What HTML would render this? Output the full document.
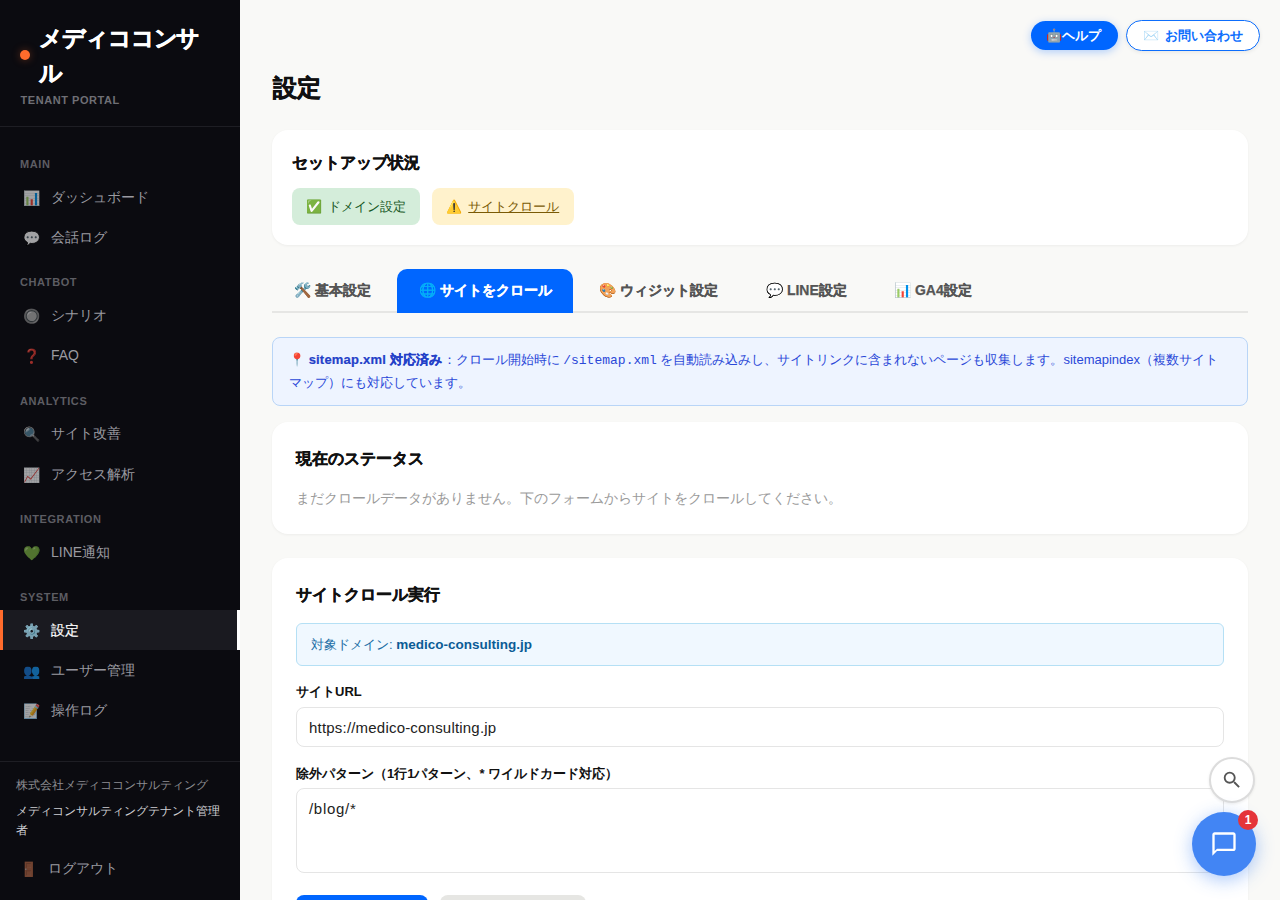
<!DOCTYPE html>
<html lang="ja">
<head>
<meta charset="utf-8">
<title>設定</title>
<style>
*{box-sizing:border-box;margin:0;padding:0}
html,body{width:1280px;height:900px;overflow:hidden}
body{font-family:"Liberation Sans",sans-serif;background:#f9f9f7;color:#111;font-size:14px;position:relative}
/* ---------- sidebar ---------- */
.side{position:absolute;left:0;top:0;width:240px;height:900px;background:#0b0b10;color:#9a9aa0}
.brand{position:absolute;left:0;top:0;width:240px;height:127px;border-bottom:1px solid #1e1e24}
.brand .dot{position:absolute;left:20px;top:50px;width:10px;height:10px;border-radius:50%;background:#ff6b2c;box-shadow:0 0 8px rgba(255,107,44,.35)}
.brand .name{position:absolute;left:39px;top:21px;width:182px;color:#fff;font-weight:700;font-size:23px;line-height:35px;letter-spacing:-1.1px;-webkit-text-stroke:.6px #fff}
.brand .sub{position:absolute;left:20.5px;top:92px;font-size:11px;font-weight:700;letter-spacing:.55px;color:#6f6f75;line-height:16px}
.sec{position:absolute;left:20px;font-size:11px;font-weight:700;letter-spacing:.6px;color:#5d5d63;line-height:14px}
.nav{position:absolute;left:0;width:240px;height:40px;line-height:40px;font-size:14px;color:#9a9aa0;white-space:nowrap}
.nav .ic{position:absolute;left:22.5px;top:1px;width:18px;text-align:center;font-size:14px;opacity:.62}
.nav .tx{position:absolute;left:51px;top:0}
.nav.on{background:#1a1a20;color:#fff;-webkit-text-stroke:.2px;border-left:3px solid #ff6b2c;width:237px}
.nav.on .ic{left:19.5px;opacity:.9}
.nav.on .tx{left:48px;top:0}
.strip{position:absolute;left:237px;top:610px;width:3px;height:40px;background:#fff}
.foot{position:absolute;left:0;top:761px;width:240px;height:139px;border-top:1px solid #1e1e24}
.foot .co{position:absolute;left:16px;top:13px;font-size:12px;color:#8d8d92;line-height:20px;white-space:nowrap}
.foot .us{position:absolute;left:16px;top:40px;width:208px;font-size:12px;color:#cfcfd3;line-height:19px}
.foot .lo{position:absolute;left:0;top:87px;width:240px;height:40px;line-height:40px;font-size:14px;color:#9a9aa0}
.foot .lo .ic{position:absolute;left:19.5px;top:0;width:18px;text-align:center;opacity:.62;font-size:14px}
.foot .lo .tx{position:absolute;left:48px;top:-1px}
/* ---------- main ---------- */
.topbtn{position:absolute;height:29px;border-radius:16px;font-size:13px;font-weight:700;line-height:29px;white-space:nowrap}
.help{left:1031px;top:21px;width:87px;background:#0066ff;color:#fff;box-shadow:0 2px 8px rgba(0,102,255,.3);padding-left:15px}
.contact{left:1126px;top:20px;width:134px;height:31px;line-height:29px;background:#fff;color:#0d6efd;border:1px solid #0d6efd;padding-left:16px;box-shadow:0 1px 4px rgba(0,0,0,.08)}
h1{position:absolute;left:273px;top:70px;font-size:24px;line-height:36px;font-weight:700;color:#111;letter-spacing:-.5px;-webkit-text-stroke:.6px #111}
.card{position:absolute;left:272px;width:976px;background:#fff;border-radius:16px;box-shadow:0 1px 3px rgba(0,0,0,.05)}
.card h2{position:absolute;font-size:16px;line-height:24px;font-weight:700;color:#111;white-space:nowrap;-webkit-text-stroke:.35px #111}
.badge{position:absolute;top:58px;height:37px;border-radius:8px;line-height:37px;font-size:13px;white-space:nowrap;padding-left:14px}
.tabs{position:absolute;left:272px;top:269px;width:976px;height:44px;border-bottom:2px solid #e6e6e4}
.tab{position:absolute;top:0;height:44px;line-height:42px;font-size:14px;font-weight:700;color:#555;white-space:nowrap;-webkit-text-stroke:.25px}
.tab.on{background:#0066ff;color:#fff;border-radius:10px 10px 0 0}
.info{position:absolute;left:272px;top:337px;width:976px;height:69px;background:#eef4ff;border:1px solid #b9d5f7;border-radius:8px;color:#2a48d8;font-size:13px;line-height:23px;padding:10px 16px}
.info b{color:#2340c8;letter-spacing:.2px;-webkit-text-stroke:.2px}
.info code{font-family:"Liberation Mono",monospace;font-size:13px;line-height:1}
.dom{position:absolute;left:24px;top:65px;width:928px;height:43px;background:#f0f8ff;border:1px solid #b5e0f5;border-radius:6px;line-height:41px;padding-left:14px;font-size:13px;color:#1b6ea6;white-space:nowrap}
.dom b{color:#0b5c96;font-size:13.5px}
.lbl{position:absolute;left:24px;font-size:13px;font-weight:700;color:#111;line-height:20px;white-space:nowrap}
.inp{position:absolute;left:24px;width:928px;background:#fff;border:1px solid #e5e5e5;border-radius:8px;font-size:15px;letter-spacing:.2px;color:#222;padding-left:12px}
.btn{position:absolute;top:337px;height:40px;border-radius:8px}
/* floating */
.fsearch{position:absolute;left:1209px;top:757px;width:46px;height:46px;border-radius:50%;background:#fff;border:2px solid #dcdcdc;box-shadow:0 1px 3px rgba(0,0,0,.08)}
.fsearch svg{position:absolute;left:10px;top:10px}
.fchat{position:absolute;left:1192px;top:812px;width:64px;height:64px;border-radius:50%;background:#4285f4;box-shadow:0 4px 18px rgba(66,133,244,.45)}
.fchat svg{position:absolute;left:18px;top:18px}
.fbadge{position:absolute;left:1238px;top:810px;width:20px;height:20px;border-radius:50%;background:#e5343a;color:#fff;font-size:12px;font-weight:700;line-height:20px;text-align:center}
</style>
</head>
<body>
<div class="side">
  <div class="brand">
    <div class="dot"></div>
    <div class="name">メディココンサル</div>
    <div class="sub">TENANT PORTAL</div>
  </div>
  <div class="sec" style="top:157px">MAIN</div>
  <div class="nav" style="top:177px"><span class="ic">📊</span><span class="tx">ダッシュボード</span></div>
  <div class="nav" style="top:217px"><span class="ic">💬</span><span class="tx">会話ログ</span></div>
  <div class="sec" style="top:275px">CHATBOT</div>
  <div class="nav" style="top:295px"><span class="ic">🔘</span><span class="tx">シナリオ</span></div>
  <div class="nav" style="top:335px"><span class="ic">❓</span><span class="tx">FAQ</span></div>
  <div class="sec" style="top:394px">ANALYTICS</div>
  <div class="nav" style="top:413px"><span class="ic">🔍</span><span class="tx">サイト改善</span></div>
  <div class="nav" style="top:454px"><span class="ic">📈</span><span class="tx">アクセス解析</span></div>
  <div class="sec" style="top:512px">INTEGRATION</div>
  <div class="nav" style="top:532px"><span class="ic">💚</span><span class="tx">LINE通知</span></div>
  <div class="sec" style="top:590px">SYSTEM</div>
  <div class="nav on" style="top:610px"><span class="ic">⚙️</span><span class="tx">設定</span></div>
  <div class="strip"></div>
  <div class="nav" style="top:650px"><span class="ic">👥</span><span class="tx">ユーザー管理</span></div>
  <div class="nav" style="top:690px"><span class="ic">📝</span><span class="tx">操作ログ</span></div>
  <div class="foot">
    <div class="co">株式会社メディココンサルティング</div>
    <div class="us">メディコンサルティングテナント管理者</div>
    <div class="lo"><span class="ic">🚪</span><span class="tx">ログアウト</span></div>
  </div>
</div>

<div class="topbtn help">🤖ヘルプ</div>
<div class="topbtn contact"><span style="opacity:.7;font-weight:400;margin-right:6px">✉️</span>お問い合わせ</div>
<h1>設定</h1>

<div class="card" style="top:130px;height:115px">
  <h2 style="left:20px;top:21px">セットアップ状況</h2>
  <div class="badge" style="left:20px;width:128px;background:#d4edda;color:#155724">✅&nbsp; <span style="margin-left:-1px">ドメイン設定</span></div>
  <div class="badge" style="left:160px;width:142px;background:#fff2cc;color:#7a5a05">⚠️&nbsp; <u style="margin-left:-1px">サイトクロール</u></div>
</div>

<div class="tabs">
  <div class="tab" style="left:22px">🛠️ 基本設定</div>
  <div class="tab on" style="left:125px;width:176px;padding-left:22px">🌐 サイトをクロール</div>
  <div class="tab" style="left:327px">🎨 ウィジット設定</div>
  <div class="tab" style="left:494px">💬 LINE設定</div>
  <div class="tab" style="left:622px">📊 GA4設定</div>
</div>

<div class="info">📍 <b>sitemap.xml 対応済み</b>：クロール開始時に <code>/sitemap.xml</code> を自動読み込みし、サイトリンクに含まれないページも収集します。sitemapindex（複数サイト<br>マップ）にも対応しています。</div>

<div class="card" style="top:422px;height:112px">
  <h2 style="left:24px;top:25px">現在のステータス</h2>
  <div style="position:absolute;left:24px;top:65px;font-size:14px;line-height:22px;color:#9a9a9a;white-space:nowrap">まだクロールデータがありません。下のフォームからサイトをクロールしてください。</div>
</div>

<div class="card" style="top:558px;height:420px">
  <h2 style="left:24px;top:25px">サイトクロール実行</h2>
  <div class="dom">対象ドメイン: <b>medico-consulting.jp</b></div>
  <div class="lbl" style="top:124px">サイトURL</div>
  <div class="inp" style="top:149px;height:40px;line-height:40px">https://medico-consulting.jp</div>
  <div class="lbl" style="top:206px">除外パターン（1行1パターン、* ワイルドカード対応）</div>
  <div class="inp" style="top:230px;height:85px;line-height:22px;padding-top:9px;letter-spacing:.7px">/blog/*</div>
  <div class="btn" style="left:24px;width:132px;background:#0066ff"></div>
  <div class="btn" style="left:168px;width:146px;background:#e6e6e3"></div>
</div>

<div class="fsearch"><svg width="22" height="22" viewBox="0 0 24 24"><path fill="#555" d="M15.5 14h-.79l-.28-.27A6.471 6.471 0 0 0 16 9.5 6.5 6.5 0 1 0 9.5 16c1.61 0 3.09-.59 4.23-1.57l.27.28v.79l5 4.99L20.49 19l-4.99-5zm-6 0C7.01 14 5 11.99 5 9.5S7.01 5 9.5 5 14 7.01 14 9.5 11.99 14 9.5 14z"/></svg></div>
<div class="fchat"><svg width="28" height="28" viewBox="0 0 24 24"><path fill="#fff" d="M20 2H4c-1.1 0-2 .9-2 2v18l4-4h14c1.1 0 2-.9 2-2V4c0-1.1-.9-2-2-2zm0 14H6l-2 2V4h16v12z"/></svg></div>
<div class="fbadge">1</div>
</body>
</html>
